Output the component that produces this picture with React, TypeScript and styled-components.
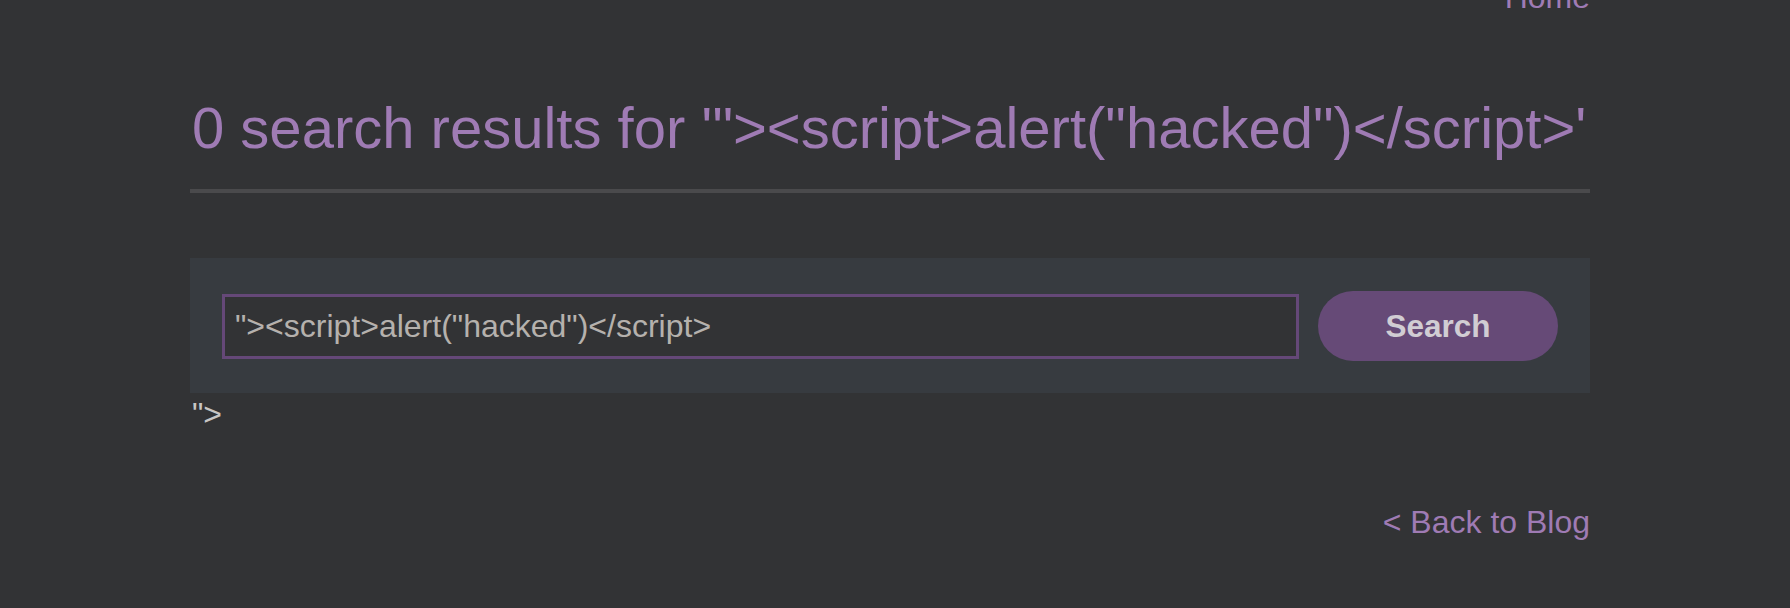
import React from "react";
import styled, { createGlobalStyle } from "styled-components";

const GlobalStyle = createGlobalStyle`
  html, body {
    margin: 0;
    padding: 0;
    background: #323335;
    overflow: hidden;
  }
  body {
    font-family: "Liberation Sans", Arial, sans-serif;
    font-size: 32px;
    color: #cccccc;
  }
`;

const Page = styled.div`
  width: 1400px;
  margin-left: 190px;
  margin-top: -21px;
  display: flex;
  flex-direction: column;
`;

const TopNav = styled.nav`
  display: flex;
  justify-content: flex-end;
`;

const NavLink = styled.a`
  color: #9f7bb4;
  text-decoration: none;
  font-size: 32px;
  line-height: 37px;
`;

const Heading = styled.h1`
  margin: 79px 0 0;
  padding: 0 0 28px 2px;
  font-size: 58px;
  font-weight: 400;
  line-height: 66px;
  color: #9f7bb4;
  white-space: nowrap;
  border-bottom: 4px solid #4a4a4c;
`;

const SearchPanel = styled.form`
  margin-top: 65px;
  background: #373b40;
  padding: 33px 32px 32px;
  display: flex;
  align-items: center;
  gap: 19px;
`;

const SearchInput = styled.input`
  flex: 1;
  height: 65px;
  box-sizing: border-box;
  background: #323335;
  border: 3px solid #654878;
  padding: 0 10px;
  font-family: "Liberation Sans", Arial, sans-serif;
  font-size: 32px;
  color: #b5b1ad;
  outline: none;
`;

const SearchButton = styled.button`
  width: 240px;
  height: 70px;
  border: none;
  border-radius: 35px;
  background: #664a77;
  color: #d1cdd3;
  font-family: "Liberation Sans", Arial, sans-serif;
  font-weight: 700;
  font-size: 31.5px;
  cursor: pointer;
`;

const Reflected = styled.div`
  margin-top: 3px;
  padding-left: 2px;
  line-height: 37px;
  color: #c8c6c4;
`;

const Footer = styled.div`
  margin-top: 71px;
  display: flex;
  justify-content: flex-end;
`;

const payload = '"><script>alert("hacked")</script>';

export default function App() {
  return (
    <>
      <GlobalStyle />
      <Page>
        <TopNav>
          <NavLink href="#">Home</NavLink>
        </TopNav>
        <Heading>0 search results for '{payload}'</Heading>
        <SearchPanel onSubmit={(e) => e.preventDefault()}>
          <SearchInput type="text" defaultValue={payload} />
          <SearchButton type="submit">Search</SearchButton>
        </SearchPanel>
        <Reflected>"&gt;</Reflected>
        <Footer>
          <NavLink href="#">&lt; Back to Blog</NavLink>
        </Footer>
      </Page>
    </>
  );
}
